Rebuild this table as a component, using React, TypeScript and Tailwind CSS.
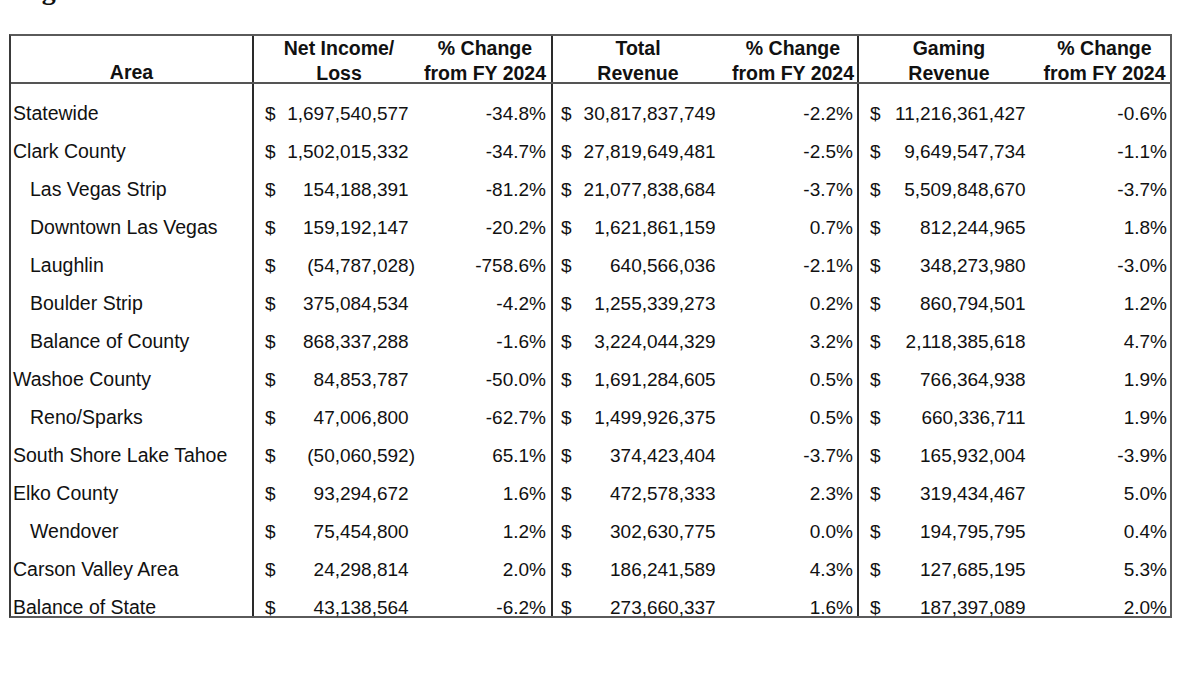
import React from "react";

type Row = {
  area: string;
  indent?: boolean;
  net: string;
  netPct: string;
  tot: string;
  totPct: string;
  gam: string;
  gamPct: string;
};

const rows: Row[] = [
  { area: "Statewide", net: "1,697,540,577", netPct: "-34.8%", tot: "30,817,837,749", totPct: "-2.2%", gam: "11,216,361,427", gamPct: "-0.6%" },
  { area: "Clark County", net: "1,502,015,332", netPct: "-34.7%", tot: "27,819,649,481", totPct: "-2.5%", gam: "9,649,547,734", gamPct: "-1.1%" },
  { area: "Las Vegas Strip", indent: true, net: "154,188,391", netPct: "-81.2%", tot: "21,077,838,684", totPct: "-3.7%", gam: "5,509,848,670", gamPct: "-3.7%" },
  { area: "Downtown Las Vegas", indent: true, net: "159,192,147", netPct: "-20.2%", tot: "1,621,861,159", totPct: "0.7%", gam: "812,244,965", gamPct: "1.8%" },
  { area: "Laughlin", indent: true, net: "(54,787,028)", netPct: "-758.6%", tot: "640,566,036", totPct: "-2.1%", gam: "348,273,980", gamPct: "-3.0%" },
  { area: "Boulder Strip", indent: true, net: "375,084,534", netPct: "-4.2%", tot: "1,255,339,273", totPct: "0.2%", gam: "860,794,501", gamPct: "1.2%" },
  { area: "Balance of County", indent: true, net: "868,337,288", netPct: "-1.6%", tot: "3,224,044,329", totPct: "3.2%", gam: "2,118,385,618", gamPct: "4.7%" },
  { area: "Washoe County", net: "84,853,787", netPct: "-50.0%", tot: "1,691,284,605", totPct: "0.5%", gam: "766,364,938", gamPct: "1.9%" },
  { area: "Reno/Sparks", indent: true, net: "47,006,800", netPct: "-62.7%", tot: "1,499,926,375", totPct: "0.5%", gam: "660,336,711", gamPct: "1.9%" },
  { area: "South Shore Lake Tahoe", net: "(50,060,592)", netPct: "65.1%", tot: "374,423,404", totPct: "-3.7%", gam: "165,932,004", gamPct: "-3.9%" },
  { area: "Elko County", net: "93,294,672", netPct: "1.6%", tot: "472,578,333", totPct: "2.3%", gam: "319,434,467", gamPct: "5.0%" },
  { area: "Wendover", indent: true, net: "75,454,800", netPct: "1.2%", tot: "302,630,775", totPct: "0.0%", gam: "194,795,795", gamPct: "0.4%" },
  { area: "Carson Valley Area", net: "24,298,814", netPct: "2.0%", tot: "186,241,589", totPct: "4.3%", gam: "127,685,195", gamPct: "5.3%" },
  { area: "Balance of State", net: "43,138,564", netPct: "-6.2%", tot: "273,660,337", totPct: "1.6%", gam: "187,397,089", gamPct: "2.0%" },
];

function Money({ v }: { v: string }) {
  const neg = v.startsWith("(");
  return (
    <>
      <span>$</span>
      <span>
        {v}
        {!neg && <span className="invisible">)</span>}
      </span>
    </>
  );
}

function HeadCell({ l1, l2, className }: { l1: string; l2: string; className: string }) {
  return (
    <div className={`flex flex-col justify-end items-center text-center ${className}`}>
      <div className="leading-[24.5px] -mb-[3px] whitespace-nowrap">
        {l1}
        <br />
        {l2}
      </div>
    </div>
  );
}

export default function App() {
  return (
    <div
      className="w-[1200px] h-[675px] bg-white text-[#111] overflow-hidden"
      style={{ fontFamily: '"Liberation Sans", Arial, sans-serif' }}
    >
      <div
        className="-mt-[24px] h-[28px] pl-[9px] text-[28px] leading-none font-bold"
        style={{ fontFamily: '"Liberation Serif", "Times New Roman", serif' }}
      >
        Region
      </div>
      <div className="mt-[30px] ml-[9px] w-[1163px] border-2 border-[#5a5a5a] border-l-[#3a3a3a]">
        {/* header */}
        <div className="flex h-[48px] border-b-2 border-[#555] text-[19.5px] font-bold">
          <div className="w-[241px] flex items-end justify-center">
            <span className="leading-none">Area</span>
          </div>
          <div className="w-[299px] flex border-l-2 border-[#2a2a2a]">
            <HeadCell l1="Net Income/" l2="Loss" className="w-[158px] pl-[12px]" />
            <HeadCell l1="% Change" l2="from FY 2024" className="w-[139px] pl-[7px]" />
          </div>
          <div className="w-[306px] flex border-l-2 border-[#2a2a2a]">
            <HeadCell l1="Total" l2="Revenue" className="w-[170px]" />
            <HeadCell l1="% Change" l2="from FY 2024" className="w-[134px] pl-[6px]" />
          </div>
          <div className="w-[313px] flex border-l-2 border-[#2a2a2a]">
            <HeadCell l1="Gaming" l2="Revenue" className="w-[180px]" />
            <HeadCell l1="% Change" l2="from FY 2024" className="w-[131px]" />
          </div>
        </div>
        {/* body */}
        <div className="text-[19px] leading-[17px]">
          {rows.map((r) => (
            <div key={r.area} className="flex h-[38px]">
              <div
                className={`w-[241px] flex items-end whitespace-nowrap text-[19.5px] ${r.indent ? "pl-[19px]" : "pl-[2px]"}`}
              >
                {r.area}
              </div>
              <div className="w-[299px] flex border-l-2 border-[#2a2a2a]">
                <div className="w-[166px] flex items-end justify-between pl-[11px] pr-[5px]">
                  <Money v={r.net} />
                </div>
                <div className="w-[131px] flex items-end justify-end pr-[5px]">{r.netPct}</div>
              </div>
              <div className="w-[306px] flex border-l-2 border-[#2a2a2a]">
                <div className="w-[170px] flex items-end justify-between pl-[8px] pr-[1px]">
                  <Money v={r.tot} />
                </div>
                <div className="w-[134px] flex items-end justify-end pr-[4px]">{r.totPct}</div>
              </div>
              <div className="w-[313px] flex border-l-2 border-[#2a2a2a]">
                <div className="w-[180px] flex items-end justify-between pl-[11px] pr-[7px]">
                  <Money v={r.gam} />
                </div>
                <div className="w-[131px] flex items-end justify-end pr-[3px]">{r.gamPct}</div>
              </div>
            </div>
          ))}
        </div>
      </div>
    </div>
  );
}
